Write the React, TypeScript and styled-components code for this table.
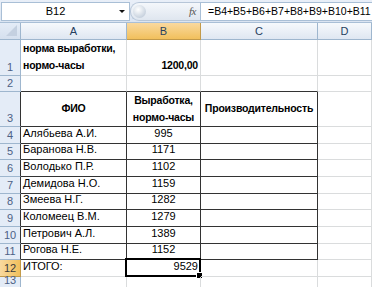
import React from 'react';
import styled, { createGlobalStyle, css } from 'styled-components';

const GlobalStyle = createGlobalStyle`
  html, body {
    margin: 0;
    padding: 0;
    background: #ffffff;
    font-family: "Liberation Sans", Arial, sans-serif;
    overflow: hidden;
  }
`;

const COLS = [21, 106, 74, 117, 54];
const ROWS = [17, 36, 16, 35, 16.67, 16.67, 16.67, 16.67, 16.67, 16.67, 16.67, 16.67, 16.67, 12];

const Sheet = styled.div`
  width: 372px;
  height: 287px;
  display: flex;
  flex-direction: column;
  overflow: hidden;
`;

const FormulaBar = styled.div`
  height: 23px;
  flex: none;
  display: flex;
  align-items: center;
  background: linear-gradient(#e9eff8, #dbe5f2);
  border-bottom: 1px solid #a9bfd6;
  box-sizing: border-box;
`;

const NameBox = styled.div`
  width: 129px;
  height: 19px;
  margin-left: 1px;
  box-sizing: border-box;
  background: #fff;
  border: 1px solid #a9bfd6;
  display: flex;
  align-items: center;
  font-size: 11px;
  color: #000;
`;

const NameText = styled.span`
  flex: 1;
  text-align: center;
  padding-right: 10px;
`;

const Arrow = styled.span`
  width: 0;
  height: 0;
  border-left: 3px solid transparent;
  border-right: 3px solid transparent;
  border-top: 3px solid #111;
  margin-right: 4px;
`;

const Pill = styled.div`
  width: 70px;
  height: 19px;
  box-sizing: border-box;
  display: flex;
  align-items: center;
  justify-content: space-between;
  padding: 0 4px 0 2px;
  border-radius: 9px 0 0 9px;
  background: linear-gradient(#f4f7fb, #dfe6ef);
  border: 1px solid #b7c6d8;
  border-right: none;
`;

const Knob = styled.span`
  width: 13px;
  height: 13px;
  border-radius: 50%;
  background: radial-gradient(circle at 40% 35%, #ffffff, #c9d3df 70%, #a9b6c6);
`;

const Fx = styled.span`
  font-family: "Liberation Serif", serif;
  font-style: italic;
  font-size: 11px;
  color: #555;
  letter-spacing: -0.5px;
`;

const Formula = styled.div`
  flex: 1;
  height: 19px;
  box-sizing: border-box;
  background: #fff;
  border: 1px solid #a9bfd6;
  border-right: none;
  display: flex;
  align-items: center;
  padding-left: 7px;
  font-size: 10.5px;
  color: #000;
  white-space: nowrap;
`;

const Grid = styled.div`
  display: grid;
  grid-template-columns: ${COLS.map((c) => `${c}px`).join(' ')};
  grid-template-rows: ${ROWS.map((r) => `${r}px`).join(' ')};
`;

const headerBase = css`
  box-sizing: border-box;
  border-right: 1px solid #9eb6ce;
  border-bottom: 1px solid #9eb6ce;
  display: flex;
  align-items: center;
  justify-content: center;
  font-size: 11px;
  color: #27415f;
`;

const Corner = styled.div`
  ${headerBase};
  background: linear-gradient(#e4ecf7, #d5e0ee);
  position: relative;
  &::after {
    content: '';
    position: absolute;
    right: 3px;
    bottom: 3px;
    width: 0;
    height: 0;
    border-left: 11px solid transparent;
    border-bottom: 11px solid #c4d0e0;
  }
`;

const ColHead = styled.div<{ $active?: boolean }>`
  ${headerBase};
  background: ${({ $active }) =>
    $active ? 'linear-gradient(#f9d99f, #f1c05c)' : 'linear-gradient(#f6f9fc, #dfe7f2)'};
  border-right-color: ${({ $active }) => ($active ? '#c29a4a' : '#9eb6ce')};
  border-bottom-color: ${({ $active }) => ($active ? '#c29a4a' : '#9eb6ce')};
`;

const RowHead = styled.div<{ $active?: boolean; $dark?: boolean }>`
  ${headerBase};
  align-items: flex-end;
  padding-bottom: 2px;
  background: ${({ $active }) => ($active ? 'linear-gradient(90deg, #f9d99f, #f1c05c)' : '#e4ecf7')};
  border-right-color: ${({ $dark, $active }) => ($dark ? '#333' : $active ? '#c29a4a' : '#9eb6ce')};
  border-bottom-color: ${({ $active }) => ($active ? '#c29a4a' : '#9eb6ce')};
  color: ${({ $active }) => ($active ? '#3a3a3a' : '#4d6185')};
`;

const Cell = styled.div<{
  $right?: boolean;
  $bottom?: boolean;
  $bold?: boolean;
  $align?: 'left' | 'center' | 'right';
  $valign?: 'end' | 'center';
}>`
  box-sizing: border-box;
  position: relative;
  border-right: 1px solid ${({ $right }) => ($right ? '#333' : '#dadcdd')};
  border-bottom: 1px solid ${({ $bottom }) => ($bottom ? '#333' : '#dadcdd')};
  display: flex;
  align-items: ${({ $valign }) => ($valign === 'center' ? 'center' : 'flex-end')};
  justify-content: ${({ $align }) =>
    $align === 'center' ? 'center' : $align === 'right' ? 'flex-end' : 'flex-start'};
  text-align: ${({ $align }) => $align || 'left'};
  padding: 0 2px 1px 2px;
  font-size: ${({ $bold }) => ($bold ? '10.5px' : '11px')};
  letter-spacing: ${({ $bold }) => ($bold ? '-0.2px' : '0')};
  line-height: 17px;
  font-weight: ${({ $bold }) => ($bold ? 700 : 400)};
  color: #000;
  white-space: pre-line;
`;

const Selection = styled.div`
  position: absolute;
  left: -2px;
  top: -2px;
  right: -1px;
  bottom: -1px;
  border: 2px solid #000;
  pointer-events: none;
  &::after {
    content: '';
    position: absolute;
    right: -4px;
    bottom: -4px;
    width: 5px;
    height: 5px;
    background: #000;
    border: 1px solid #fff;
  }
`;

type CellData = {
  text?: string;
  bold?: boolean;
  align?: 'left' | 'center' | 'right';
  valign?: 'end' | 'center';
};

const names: [string, string][] = [
  ['Алябьева А.И.', '995'],
  ['Баранова Н.В.', '1171'],
  ['Володько П.Р.', '1102'],
  ['Демидова Н.О.', '1159'],
  ['Змеева Н.Г.', '1282'],
  ['Коломеец В.М.', '1279'],
  ['Петрович А.Л.', '1389'],
  ['Рогова Н.Е.', '1152'],
];

const rows: CellData[][] = [
  [
    { text: 'норма выработки,\nнормо-часы', bold: true },
    { text: '1200,00', bold: true, align: 'right' },
    {},
    {},
  ],
  [{}, {}, {}, {}],
  [
    { text: 'ФИО', bold: true, align: 'center', valign: 'center' },
    { text: 'Выработка,\nнормо-часы', bold: true, align: 'center', valign: 'center' },
    { text: 'Производительность', bold: true, align: 'center', valign: 'center' },
    {},
  ],
  ...names.map(([n, v]) => [{ text: n }, { text: v, align: 'center' as const }, {}, {}]),
  [{ text: 'ИТОГО:' }, { text: '9529', align: 'right' }, {}, {}],
  [{}, {}, {}, {}],
];

// table A3:C11 -> row index 2..10 (0-based), col 0..2
const inTable = (r: number, c: number) => r >= 2 && r <= 10 && c >= 0 && c <= 2;

export default function App() {
  return (
    <>
      <GlobalStyle />
      <Sheet>
        <FormulaBar>
          <NameBox>
            <NameText>B12</NameText>
            <Arrow />
          </NameBox>
          <Pill>
            <Knob />
            <Fx>fx</Fx>
          </Pill>
          <Formula>=B4+B5+B6+B7+B8+B9+B10+B11</Formula>
        </FormulaBar>
        <Grid>
          <Corner />
          {['A', 'B', 'C', 'D'].map((l) => (
            <ColHead key={l} $active={l === 'B'}>
              {l}
            </ColHead>
          ))}
          {rows.map((row, r) => (
            <React.Fragment key={r}>
              <RowHead $active={r === 11} $dark={inTable(r, 0)}>
                {r + 1}
              </RowHead>
              {row.map((cell, c) => (
                <Cell
                  key={c}
                  $right={inTable(r, c) || inTable(r, c + 1)}
                  $bottom={inTable(r, c) || inTable(r + 1, c)}
                  $bold={cell.bold}
                  $align={cell.align}
                  $valign={cell.valign}
                >
                  {cell.text}
                  {r === 11 && c === 1 && <Selection />}
                </Cell>
              ))}
            </React.Fragment>
          ))}
        </Grid>
      </Sheet>
    </>
  );
}
